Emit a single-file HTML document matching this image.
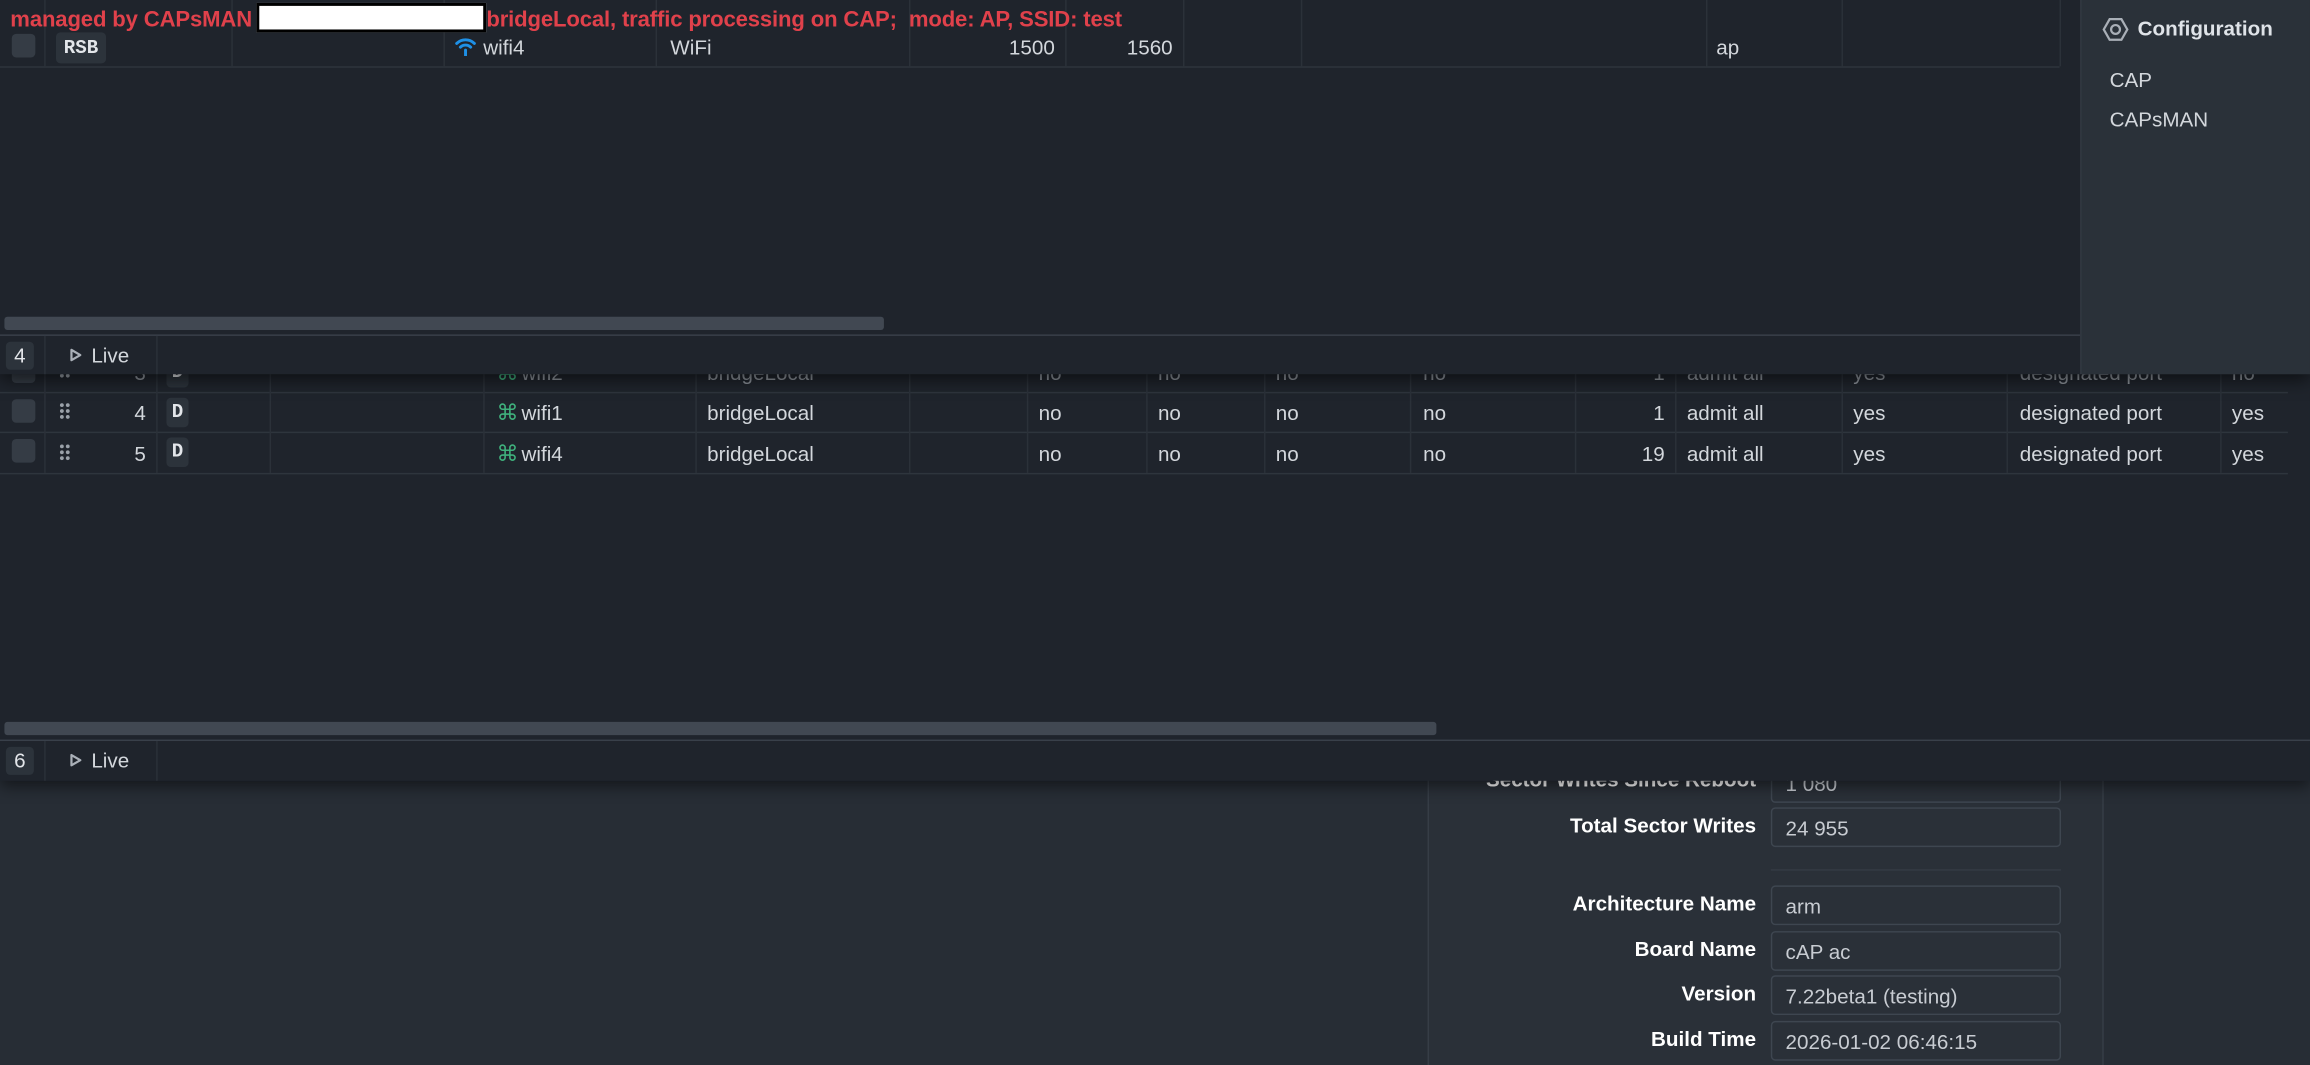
<!DOCTYPE html>
<html><head><meta charset="utf-8"><style>
*{box-sizing:border-box;margin:0;padding:0}
html,body{width:2310px;height:1064px;overflow:hidden;background:#272d35}
#s{position:absolute;left:0;top:0;width:1568px;height:723px;transform:scale(1.47321);transform-origin:0 0;font-family:"Liberation Sans",sans-serif;font-size:14px;color:#d3d7dc}
.a{position:absolute;white-space:nowrap}
.vl{position:absolute;width:1px;background:#2b3139}
.hl{position:absolute;height:1px;background:#2e353d}
.cb{position:absolute;width:16px;height:16px;border-radius:3px;background:#353c45}
.bd{position:absolute;background:#2c333b;border-radius:3px;font-family:"Liberation Mono",monospace;font-weight:bold;font-size:13px;color:#e3e6ea;text-align:center}
.lab{position:absolute;right:376px;font-weight:bold;color:#fff;text-align:right}
.inp{position:absolute;left:1202px;width:197px;height:27px;border:1px solid #3e4650;border-radius:3px;color:#c8ccd2;padding-left:9px;line-height:27px}
</style></head><body><div id="s">
<!-- bottom layer -->
<div class="a" style="left:969px;top:0;width:459px;height:723px;background:#2a3038;border-left:1px solid #363d46;border-right:1px solid #363d46"></div>
<div class="lab" style="top:521px">Sector Writes Since Reboot</div>
<div class="inp" style="top:518px">1 080</div>
<div class="lab" style="top:552px">Total Sector Writes</div>
<div class="inp" style="top:548px">24 955</div>
<div class="hl" style="left:1202px;top:590px;width:197px;background:#343b44"></div>
<div class="lab" style="top:605px">Architecture Name</div>
<div class="inp" style="top:601px">arm</div>
<div class="lab" style="top:636px">Board Name</div>
<div class="inp" style="top:632px">cAP ac</div>
<div class="lab" style="top:666px">Version</div>
<div class="inp" style="top:662px">7.22beta1 (testing)</div>
<div class="lab" style="top:697px">Build Time</div>
<div class="inp" style="top:693px">2026-01-02 06:46:15</div>

<!-- middle panel -->
<div class="a" style="left:0;top:240px;width:1568px;height:290px;background:#1f242c;box-shadow:0 4px 10px rgba(0,0,0,.5)">
  <div class="hl" style="left:0;top:26px;width:1553px"></div>
  <div class="hl" style="left:0;top:53px;width:1553px"></div>
  <div class="hl" style="left:0;top:81px;width:1553px"></div>
  <div class="vl" style="left:30px;top:0;height:81px"></div>
  <div class="vl" style="left:106px;top:0;height:81px"></div>
  <div class="vl" style="left:183px;top:0;height:81px"></div>
  <div class="vl" style="left:328px;top:0;height:81px"></div>
  <div class="vl" style="left:472px;top:0;height:81px"></div>
  <div class="vl" style="left:617px;top:0;height:81px"></div>
  <div class="vl" style="left:697px;top:0;height:81px"></div>
  <div class="vl" style="left:778px;top:0;height:81px"></div>
  <div class="vl" style="left:858px;top:0;height:81px"></div>
  <div class="vl" style="left:957px;top:0;height:81px"></div>
  <div class="vl" style="left:1069px;top:0;height:81px"></div>
  <div class="vl" style="left:1137px;top:0;height:81px"></div>
  <div class="vl" style="left:1250px;top:0;height:81px"></div>
  <div class="vl" style="left:1362px;top:0;height:81px"></div>
  <div class="vl" style="left:1507px;top:0;height:81px"></div>
  <!-- row 3 (mostly hidden) -->
  <div style="position:absolute;left:0;top:0;width:1568px;height:26px;color:#8d939b">
  <div class="cb" style="left:8px;top:4px"></div>
  <svg class="a" style="left:40px;top:5px" width="8" height="12"><g fill="#9aa1a9"><circle cx="2" cy="2" r="1.3"/><circle cx="6" cy="2" r="1.3"/><circle cx="2" cy="6" r="1.3"/><circle cx="6" cy="6" r="1.3"/><circle cx="2" cy="10" r="1.3"/><circle cx="6" cy="10" r="1.3"/></g></svg>
  <div class="a" style="left:80px;top:5px;width:19px;text-align:right">3</div>
  <div class="bd" style="left:113px;top:3px;width:15px;height:20px;line-height:20px">D</div>
  <div class="a" style="left:337px;top:4px;color:#3fb07c;font-size:15px">⌘</div>
  <div class="a" style="left:354px;top:5px">wifi2</div>
  <div class="a" style="left:480px;top:5px">bridgeLocal</div>
  <div class="a" style="left:705px;top:5px">no</div><div class="a" style="left:786px;top:5px">no</div>
  <div class="a" style="left:866px;top:5px">no</div><div class="a" style="left:966px;top:5px">no</div>
  <div class="a" style="left:1100px;top:5px;width:30px;text-align:right">1</div>
  <div class="a" style="left:1145px;top:5px">admit all</div>
  <div class="a" style="left:1258px;top:5px">yes</div>
  <div class="a" style="left:1371px;top:5px">designated port</div>
  <div class="a" style="left:1515px;top:5px">no</div>
  </div>
  <!-- row 4 -->
  <div class="cb" style="left:8px;top:31px"></div>
  <svg class="a" style="left:40px;top:33px" width="8" height="12"><g fill="#9aa1a9"><circle cx="2" cy="2" r="1.3"/><circle cx="6" cy="2" r="1.3"/><circle cx="2" cy="6" r="1.3"/><circle cx="6" cy="6" r="1.3"/><circle cx="2" cy="10" r="1.3"/><circle cx="6" cy="10" r="1.3"/></g></svg>
  <div class="a" style="left:80px;top:32px;width:19px;text-align:right">4</div>
  <div class="bd" style="left:113px;top:30px;width:15px;height:20px;line-height:20px">D</div>
  <div class="a" style="left:337px;top:31px;color:#3fb07c;font-size:15px">⌘</div>
  <div class="a" style="left:354px;top:32px">wifi1</div>
  <div class="a" style="left:480px;top:32px">bridgeLocal</div>
  <div class="a" style="left:705px;top:32px">no</div><div class="a" style="left:786px;top:32px">no</div>
  <div class="a" style="left:866px;top:32px">no</div><div class="a" style="left:966px;top:32px">no</div>
  <div class="a" style="left:1100px;top:32px;width:30px;text-align:right">1</div>
  <div class="a" style="left:1145px;top:32px">admit all</div>
  <div class="a" style="left:1258px;top:32px">yes</div>
  <div class="a" style="left:1371px;top:32px">designated port</div>
  <div class="a" style="left:1515px;top:32px">yes</div>
  <!-- row 5 -->
  <div class="cb" style="left:8px;top:58px"></div>
  <svg class="a" style="left:40px;top:61px" width="8" height="12"><g fill="#9aa1a9"><circle cx="2" cy="2" r="1.3"/><circle cx="6" cy="2" r="1.3"/><circle cx="2" cy="6" r="1.3"/><circle cx="6" cy="6" r="1.3"/><circle cx="2" cy="10" r="1.3"/><circle cx="6" cy="10" r="1.3"/></g></svg>
  <div class="a" style="left:80px;top:60px;width:19px;text-align:right">5</div>
  <div class="bd" style="left:113px;top:57px;width:15px;height:20px;line-height:20px">D</div>
  <div class="a" style="left:337px;top:59px;color:#3fb07c;font-size:15px">⌘</div>
  <div class="a" style="left:354px;top:60px">wifi4</div>
  <div class="a" style="left:480px;top:60px">bridgeLocal</div>
  <div class="a" style="left:705px;top:60px">no</div><div class="a" style="left:786px;top:60px">no</div>
  <div class="a" style="left:866px;top:60px">no</div><div class="a" style="left:966px;top:60px">no</div>
  <div class="a" style="left:1100px;top:60px;width:30px;text-align:right">19</div>
  <div class="a" style="left:1145px;top:60px">admit all</div>
  <div class="a" style="left:1258px;top:60px">yes</div>
  <div class="a" style="left:1371px;top:60px">designated port</div>
  <div class="a" style="left:1515px;top:60px">yes</div>
  <div class="a" style="left:3px;top:250px;width:972px;height:9px;background:#414852;border-radius:2px"></div>
  <div class="hl" style="left:0;top:262px;width:1568px;background:#39404a"></div>
  <div class="vl" style="left:30px;top:263px;height:27px"></div>
  <div class="vl" style="left:106px;top:263px;height:27px"></div>
  <div class="bd" style="left:4px;top:267px;width:19px;height:19px;line-height:19px;font-weight:normal;font-family:'Liberation Sans',sans-serif;font-size:14px">6</div>
  <svg class="a" style="left:47px;top:271px" width="9" height="10"><path d="M1.5 1.5v7l6-3.5z" fill="none" stroke="#aab0b8" stroke-width="1.5" stroke-linejoin="round"/></svg>
  <div class="a" style="left:62px;top:268px">Live</div>
</div>

<!-- top panel -->
<div class="a" style="left:0;top:0;width:1568px;height:254px;background:#1f242c;box-shadow:0 4px 12px rgba(0,0,0,.6)">
  <div class="hl" style="left:0;top:45px;width:1398px"></div>
  <div class="vl" style="left:30px;top:0;height:45px"></div>
  <div class="vl" style="left:157px;top:0;height:45px"></div>
  <div class="vl" style="left:301px;top:0;height:45px"></div>
  <div class="vl" style="left:445px;top:0;height:45px"></div>
  <div class="vl" style="left:617px;top:0;height:45px"></div>
  <div class="vl" style="left:723px;top:0;height:45px"></div>
  <div class="vl" style="left:803px;top:0;height:45px"></div>
  <div class="vl" style="left:883px;top:0;height:45px"></div>
  <div class="vl" style="left:1158px;top:0;height:45px"></div>
  <div class="vl" style="left:1250px;top:0;height:45px"></div>
  <div class="vl" style="left:1398px;top:0;height:45px"></div>
  <div class="a" style="left:7px;top:2px;color:#e0414b;font-weight:bold;font-size:15px;letter-spacing:-0.1px">managed by CAPsMAN <span style="display:inline-block;width:156px;height:20px;background:#fff;border:2px solid #000;vertical-align:-4px;margin-left:-1px"></span>bridgeLocal, traffic processing on CAP;&nbsp; mode: AP, SSID: test</div>
  <div class="cb" style="left:8px;top:23px"></div>
  <div class="bd" style="left:38px;top:22px;width:34px;height:21px;line-height:21px">RSB</div>
  <svg class="a" style="left:308px;top:24px" width="16" height="14" viewBox="0 0 16 14"><path d="M2 5.5a8.5 8.5 0 0 1 12 0M4.5 8a5 5 0 0 1 7 0" stroke="#1e90e6" stroke-width="2" fill="none" stroke-linecap="round"/><path d="M8 10v4" stroke="#1e90e6" stroke-width="2" stroke-linecap="round"/></svg>
  <div class="a" style="left:328px;top:24px">wifi4</div>
  <div class="a" style="left:455px;top:24px">WiFi</div>
  <div class="a" style="left:660px;top:24px;width:56px;text-align:right">1500</div>
  <div class="a" style="left:740px;top:24px;width:56px;text-align:right">1560</div>
  <div class="a" style="left:1165px;top:24px">ap</div>
  <div class="a" style="left:3px;top:215px;width:597px;height:9px;background:#414852;border-radius:2px"></div>
  <div class="hl" style="left:0;top:227px;width:1412px;background:#39404a"></div>
  <div class="vl" style="left:30px;top:228px;height:26px"></div>
  <div class="vl" style="left:106px;top:228px;height:26px"></div>
  <div class="bd" style="left:4px;top:232px;width:19px;height:19px;line-height:19px;font-weight:normal;font-family:'Liberation Sans',sans-serif;font-size:14px">4</div>
  <svg class="a" style="left:47px;top:236px" width="9" height="10"><path d="M1.5 1.5v7l6-3.5z" fill="none" stroke="#aab0b8" stroke-width="1.5" stroke-linejoin="round"/></svg>
  <div class="a" style="left:62px;top:233px">Live</div>
  <div class="a" style="left:1412px;top:0;width:156px;height:254px;background:#2a3139;border-left:1px solid #323942">
    <svg class="a" style="left:14px;top:11px" width="18" height="18" viewBox="0 0 18 18"><path d="M5 2h8l4 7-4 7H5L1 9z" fill="none" stroke="#a9afb7" stroke-width="1.5"/><circle cx="9" cy="9" r="3" fill="none" stroke="#a9afb7" stroke-width="1.5"/></svg>
    <div class="a" style="left:38px;top:11px;font-weight:bold;color:#dfe3e8">Configuration</div>
    <div class="a" style="left:19px;top:46px;color:#d3d7dc">CAP</div>
    <div class="a" style="left:19px;top:73px;color:#d3d7dc">CAPsMAN</div>
  </div>
</div>
</div></body></html>
